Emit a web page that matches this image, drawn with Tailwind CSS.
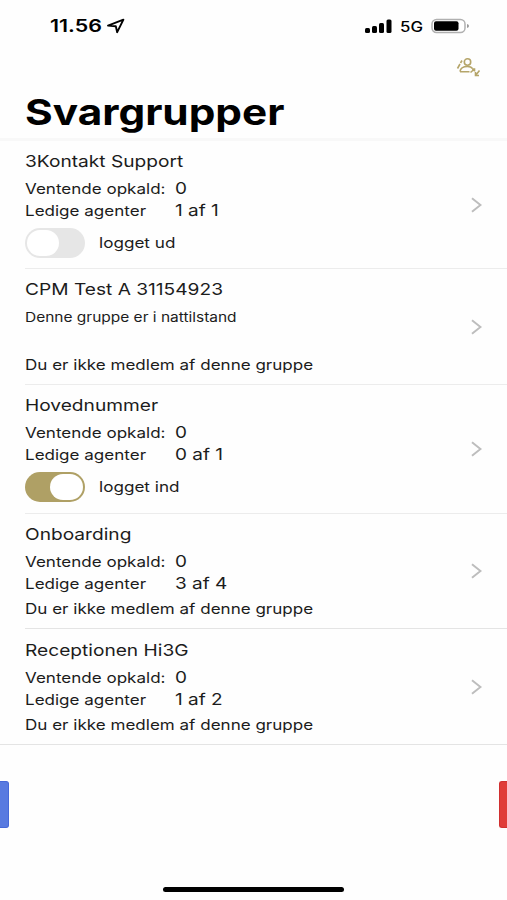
<!DOCTYPE html>
<html lang="da">
<head>
    <meta charset="UTF-8">
    <meta name="viewport" content="width=device-width, initial-scale=1.0">
    <title>Svargrupper</title>
    <script src="https://cdn.jsdelivr.net/npm/@tailwindcss/browser@4"></script>
</head>
<body class="bg-[#fefefe] overflow-hidden h-[900px] flex flex-col font-['Inter',sans-serif] text-[#1c1c1c]">
    <!-- status bar -->
    <div class="h-[52px] flex items-center pl-[50px] pr-[37px] text-black">
      <span class="w-[54px] pt-[2px] text-[17px] font-semibold whitespace-nowrap"><span class="inline-block origin-left scale-x-[1.26]">11.56</span></span>
      <svg class="ml-[2px]" width="20" height="16" viewBox="0 0 20 16" fill="none" stroke="black" stroke-width="1.9" stroke-linejoin="round"><path d="M2 7.6 17.4 1.7 11.2 14.2 9.8 8.2Z"/></svg>
      <div class="ml-auto flex items-center">
        <svg width="28" height="16" viewBox="0 0 28 16"><rect x="0" y="10" width="5" height="5" rx="1.5"/><rect x="7" y="8" width="5" height="7" rx="1.5"/><rect x="14" y="5" width="5" height="10" rx="1.5"/><rect x="21.5" y="1.500" width="5" height="13.500" rx="1.5"/></svg>
        <span class="ml-[7px] w-[24px] text-[14px] font-medium whitespace-nowrap"><span class="inline-block origin-left scale-x-[1.2]">5G</span></span>
        <svg class="ml-[7px]" width="39" height="16" viewBox="0 0 39 16"><rect x="1" y="1.5" width="33" height="13" rx="4.5" fill="white" stroke="#b0b0b0" stroke-width="1.5"/><rect x="3" y="3.3" width="24.5" height="9.4" rx="2"/><path d="M36 6v4q2-.5 2-2t-2-2" fill="#999"/></svg>
      </div>
    </div>

    <!-- header -->
    <div class="h-[32px] flex justify-end pr-[25px]">
      <svg class="mt-[5px]" width="26" height="22" viewBox="0 0 26 22" fill="none" stroke="#b5a56a" stroke-width="1.6"><circle cx="11.500" cy="5" r="3.2"/><path d="M4 14.500C4.500 10.500 8 9.500 11.500 9.500 14 9.500 15.500 10 16.500 11.500M4 14.700H13.500"/><path d="M1.500 11.500 4 7M4.500 6 6 3.500M14.500 15.500 18.500 12M16 12h2.500v2.500M23.500 13.500 19.500 18.500M19.500 15v3.500h3.500"/></svg>
    </div>
    <h1 class="h-[57px] pl-[25px] border-b-3 border-[#f8f8f8] text-[36px] leading-[56px] font-bold text-black whitespace-nowrap"><span class="inline-block origin-left scale-x-[1.175]">Svargrupper</span></h1>

    <!-- groups -->
    <div>
      <div class="ml-[25px] pr-[25px] h-[128px] flex items-center justify-between border-b border-[#ececec]">
        <div class="h-full pt-[8px] whitespace-nowrap text-[14.5px] leading-[22px]">
          <h2 class="h-[28px] text-[16.5px] leading-[24px]"><span class="inline-block origin-left scale-x-[1.16]">3Kontakt Support</span></h2>
          <div class="flex"><p class="w-[150px] pt-px"><span class="inline-block origin-left scale-x-[1.175]">Ventende opkald:</span></p><p class="text-[16.5px]"><span class="inline-block origin-left scale-x-[1.15]">0</span></p></div>
          <div class="flex -mt-px"><p class="w-[150px] pt-px"><span class="inline-block origin-left scale-x-[1.175]">Ledige agenter</span></p><p class="text-[16.5px]"><span class="inline-block origin-left scale-x-[1.15]">1 af 1</span></p></div>
          <div class="mt-[6px] flex items-center">
            <div class="w-[60px] h-[30px] rounded-full bg-[#e6e6e6] p-[2px]"><div class="w-[32px] h-[26px] rounded-full bg-white"></div></div>
            <p class="ml-[14px]"><span class="inline-block origin-left scale-x-[1.18]">logget ud</span></p>
          </div>
        </div>
        <svg width="11" height="16" viewBox="0 0 11 16" fill="none" stroke="#bdbdbd" stroke-width="2"><path d="M1 1.200 9.500 8 1 14.800"/></svg>
      </div>

      <div class="ml-[25px] pr-[25px] h-[116px] flex items-center justify-between border-b border-[#ececec]">
        <div class="h-full pt-[8px] whitespace-nowrap text-[14.5px] leading-[22px]">
          <h2 class="h-[28px] text-[16.5px] leading-[24px]"><span class="inline-block origin-left scale-x-[1.16]">CPM Test A 31154923</span></h2>
          <p class="pt-px text-[13px]"><span class="inline-block origin-left scale-x-[1.19]">Denne gruppe er i nattilstand</span></p>
          <p class="mt-[26px]"><span class="inline-block origin-left scale-x-[1.175]">Du er ikke medlem af denne gruppe</span></p>
        </div>
        <svg width="11" height="16" viewBox="0 0 11 16" fill="none" stroke="#bdbdbd" stroke-width="2"><path d="M1 1.200 9.500 8 1 14.800"/></svg>
      </div>

      <div class="ml-[25px] pr-[25px] h-[129px] flex items-center justify-between border-b border-[#ececec]">
        <div class="h-full pt-[8px] whitespace-nowrap text-[14.5px] leading-[22px]">
          <h2 class="h-[28px] text-[16.5px] leading-[24px]"><span class="inline-block origin-left scale-x-[1.16]">Hovednummer</span></h2>
          <div class="flex"><p class="w-[150px] pt-px"><span class="inline-block origin-left scale-x-[1.175]">Ventende opkald:</span></p><p class="text-[16.5px]"><span class="inline-block origin-left scale-x-[1.15]">0</span></p></div>
          <div class="flex -mt-px"><p class="w-[150px] pt-px"><span class="inline-block origin-left scale-x-[1.175]">Ledige agenter</span></p><p class="text-[16.5px]"><span class="inline-block origin-left scale-x-[1.15]">0 af 1</span></p></div>
          <div class="mt-[6px] flex items-center">
            <div class="w-[60px] h-[30px] rounded-full bg-[#afa065] p-[2px] flex justify-end"><div class="w-[33px] h-[26px] rounded-full bg-white"></div></div>
            <p class="ml-[14px]"><span class="inline-block origin-left scale-x-[1.18]">logget ind</span></p>
          </div>
        </div>
        <svg width="11" height="16" viewBox="0 0 11 16" fill="none" stroke="#bdbdbd" stroke-width="2"><path d="M1 1.200 9.500 8 1 14.800"/></svg>
      </div>

      <div class="ml-[25px] pr-[25px] h-[115px] flex items-center justify-between border-b border-[#e4e4e4]">
        <div class="h-full pt-[8px] whitespace-nowrap text-[14.5px] leading-[22px]">
          <h2 class="h-[28px] text-[16.5px] leading-[24px]"><span class="inline-block origin-left scale-x-[1.16]">Onboarding</span></h2>
          <div class="flex"><p class="w-[150px] pt-px"><span class="inline-block origin-left scale-x-[1.175]">Ventende opkald:</span></p><p class="text-[16.5px]"><span class="inline-block origin-left scale-x-[1.15]">0</span></p></div>
          <div class="flex -mt-px"><p class="w-[150px] pt-px"><span class="inline-block origin-left scale-x-[1.175]">Ledige agenter</span></p><p class="text-[16.5px]"><span class="inline-block origin-left scale-x-[1.15]">3 af 4</span></p></div>
          <p class="mt-[3px]"><span class="inline-block origin-left scale-x-[1.175]">Du er ikke medlem af denne gruppe</span></p>
        </div>
        <svg width="11" height="16" viewBox="0 0 11 16" fill="none" stroke="#bdbdbd" stroke-width="2"><path d="M1 1.200 9.500 8 1 14.800"/></svg>
      </div>

      <div class="pl-[25px] pr-[25px] h-[116px] flex items-center justify-between border-b border-[#e4e4e4]">
        <div class="h-full pt-[9px] whitespace-nowrap text-[14.5px] leading-[22px]">
          <h2 class="h-[28px] text-[16.5px] leading-[24px]"><span class="inline-block origin-left scale-x-[1.16]">Receptionen Hi3G</span></h2>
          <div class="flex"><p class="w-[150px] pt-px"><span class="inline-block origin-left scale-x-[1.175]">Ventende opkald:</span></p><p class="text-[16.5px]"><span class="inline-block origin-left scale-x-[1.15]">0</span></p></div>
          <div class="flex -mt-px"><p class="w-[150px] pt-px"><span class="inline-block origin-left scale-x-[1.175]">Ledige agenter</span></p><p class="text-[16.5px]"><span class="inline-block origin-left scale-x-[1.15]">1 af 2</span></p></div>
          <p class="mt-[3px]"><span class="inline-block origin-left scale-x-[1.175]">Du er ikke medlem af denne gruppe</span></p>
        </div>
        <svg width="11" height="16" viewBox="0 0 11 16" fill="none" stroke="#bdbdbd" stroke-width="2"><path d="M1 1.200 9.500 8 1 14.800"/></svg>
      </div>
    </div>

    <div class="mt-[36px] flex justify-between">
      <div class="w-[9px] h-[47px] rounded-r-[3px] bg-[#587ae0] border-y border-r border-[#4668d8]"></div>
      <div class="w-[8px] h-[47px] rounded-l-[3px] bg-[#e03c38] border-y border-l border-[#d03030]"></div>
    </div>

    <div class="mt-auto mb-[8px] mx-auto w-[181px] h-[5px] rounded-full bg-black"></div>
</body>
</html>
